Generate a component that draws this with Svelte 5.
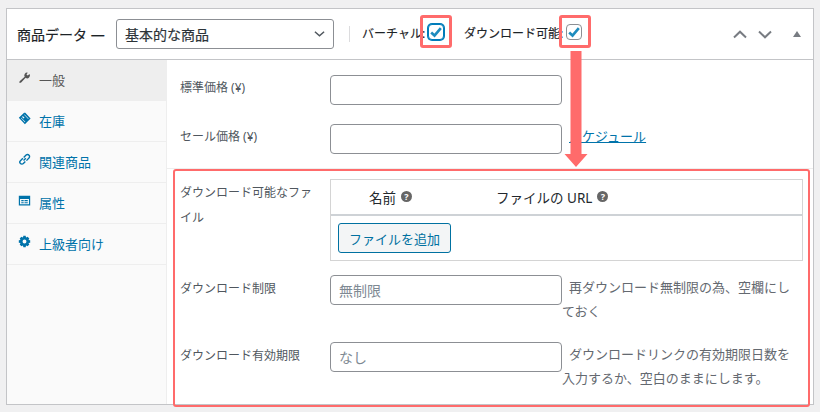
<script lang="ts">
  const tabs = [
    { id: 'wrench', label: '一般' },
    { id: 'tag', label: '在庫' },
    { id: 'link', label: '関連商品' },
    { id: 'table', label: '属性' },
    { id: 'gear', label: '上級者向け' }
  ];
</script>

{#snippet check()}
  <svg class="tick" viewBox="0 0 16 16" aria-hidden="true">
    <path d="M2.5 8.5 L6.3 12 L13.5 3.5" />
  </svg>
{/snippet}

{#snippet help()}
  <span class="help">?</span>
{/snippet}

<div class="page">
  <div class="panel">
    <header class="head">
      <h2>商品データ —</h2>
      <div class="select">
        <span>基本的な商品</span>
        <svg viewBox="0 0 12 8" aria-hidden="true"><path d="M1 1.5 L6 6 L11 1.5" /></svg>
      </div>
      <i class="sep"></i>
      <span class="opt">バーチャル:</span>
      <span class="box focus">{@render check()}</span>
      <span class="opt second">ダウンロード可能:</span>
      <span class="box">{@render check()}</span>
      <div class="handles">
        <svg viewBox="0 0 14 9" aria-hidden="true"><path d="M1 7.5 L7 1.7 L13 7.5" /></svg>
        <svg viewBox="0 0 14 9" aria-hidden="true"><path d="M1 1.5 L7 7.3 L13 1.5" /></svg>
        <i class="toggle"></i>
      </div>
    </header>

    <div class="body">
      <ul class="tabs">
        {#each tabs as tab, i}
          <li class:active={i === 0}>
            <svg viewBox="0 0 16 16" aria-hidden="true">
              {#if tab.id === 'wrench'}
                <path d="M1.5 14.5 L2 12.5 L8.2 7 A3.4 3.4 0 0 1 12 2 L10.4 4.2 L12 5.6 L14.2 3.8 A3.4 3.4 0 0 1 9.4 8.4 L3.6 14.6 Z" />
              {:else if tab.id === 'tag'}
                <path fill-rule="evenodd" d="M1 7 L7.5 1 L9 1 L15.5 8 L8.5 15 Z M5 6 L7 8 L8 7 L6 5 Z M7.5 3.5 L12.5 8.5 L13 8 L8 3 Z M3.5 7.5 L8.5 12.5 L9 12 L4 7 Z" />
              {:else if tab.id === 'link'}
                <path class="line" d="M6.8 9.2 L9.6 6.4 M6 6.4 L3 9.4 A2.4 2.4 0 0 0 6.6 13 L9 10.4 M7 5.6 L10 2.6 A2.4 2.4 0 0 1 13.5 6.2 L10.4 9.4" />
              {:else if tab.id === 'table'}
                <path fill-rule="evenodd" d="M1 2 H15 V14 H1 Z M2.5 6 V12.5 H13.5 V6 Z M4 7.5 H7 V9 H4 Z M8 7.5 H12 V9 H8 Z M4 10 H7 V11.5 H4 Z M8 10 H12 V11.5 H8 Z" />
              {:else}
                <path fill-rule="evenodd" d="M6.6 1 H9.4 L9.9 3.1 L11.8 2.1 L13.9 4.2 L12.9 6.1 L15 6.6 V9.4 L12.9 9.9 L13.9 11.8 L11.8 13.9 L9.9 12.9 L9.4 15 H6.6 L6.1 12.9 L4.2 13.9 L2.1 11.8 L3.1 9.9 L1 9.4 V6.6 L3.1 6.1 L2.1 4.2 L4.2 2.1 L6.1 3.1 Z M8 5.6 A2.4 2.4 0 1 0 8 10.4 A2.4 2.4 0 1 0 8 5.6 Z" />
              {/if}
            </svg>
            <span>{tab.label}</span>
          </li>
        {/each}
      </ul>

      <div class="fields">
        <section class="group">
          <div class="row">
            <label for="price">標準価格 (¥)</label>
            <input id="price" />
          </div>
          <div class="row">
            <label for="sale">セール価格 (¥)</label>
            <input id="sale" />
            <a href="#schedule">スケジュール</a>
          </div>
        </section>

        <section class="group dl">
          <div class="files-row">
            <div class="label-text">ダウンロード可能なファイル</div>
            <div class="files">
              <div class="files-head">
                <span class="name">名前 {@render help()}</span>
                <span class="url">ファイルの URL {@render help()}</span>
              </div>
              <div class="files-foot"><button>ファイルを追加</button></div>
            </div>
          </div>
          <div class="row note">
            <label for="limit">ダウンロード制限</label>
            <p><input id="limit" placeholder="無制限" /><span>再ダウンロード無制限の為、空欄にしておく</span></p>
          </div>
          <div class="row note">
            <label for="expiry">ダウンロード有効期限</label>
            <p><input id="expiry" placeholder="なし" /><span>ダウンロードリンクの有効期限日数を入力するか、空白のままにします。</span></p>
          </div>
        </section>
      </div>
    </div>
  </div>

  <!-- annotations drawn on top of the screenshot -->
  <i class="mark m1"></i>
  <i class="mark m2"></i>
  <i class="mark m3"></i>
  <svg class="arrow" viewBox="0 0 24 116" aria-hidden="true">
    <path d="M6.5 0 H17.5 V103 H23.5 L12 116 L0.5 103 H6.5 Z" />
  </svg>
</div>

<style>
  :global(body) {
    margin: 0;
    background: #f0f0f1;
  }
  .page {
    position: relative;
    width: 820px;
    height: 412px;
    padding: 8px 6px 0 6px;
    box-sizing: border-box;
    overflow: hidden;
    font-family: "Noto Sans", "Noto Sans CJK JP", sans-serif;
    font-size: 13px;
    color: #3c434a;
  }
  .panel {
    height: 397px;
    box-sizing: border-box;
    background: #fff;
    border: 1px solid #c3c4c7;
    display: flex;
    flex-direction: column;
  }
  .head {
    height: 51px;
    flex: none;
    box-sizing: border-box;
    border-bottom: 1px solid #c3c4c7;
    display: flex;
    align-items: center;
    padding-left: 10px;
    color: #1d2327;
  }
  h2 {
    margin: 0;
    font-size: 14px;
    font-weight: 400;
    -webkit-text-stroke: 0.2px #1d2327;
    white-space: nowrap;
    width: 99px;
  }
  .select {
    width: 218px;
    height: 30px;
    box-sizing: border-box;
    border: 1px solid #8c8f94;
    border-radius: 3px;
    display: flex;
    align-items: center;
    justify-content: space-between;
    padding: 0 8px;
    font-size: 14px;
    -webkit-text-stroke: 0.2px #2c3338;
    color: #2c3338;
  }
  .select svg {
    width: 11px;
    height: 8px;
  }
  .select path {
    fill: none;
    stroke: #50575e;
    stroke-width: 1.6;
  }
  .sep {
    width: 1px;
    height: 16px;
    background: #dcdcde;
    margin: 0 12px 0 15px;
  }
  .opt {
    white-space: nowrap;
    font-size: 12px;
    margin-top: -2px;
    -webkit-text-stroke: 0.15px #1d2327;
  }
  .second {
    margin-left: 20px;
  }
  .box {
    width: 16px;
    height: 16px;
    flex: none;
    box-sizing: border-box;
    border: 1px solid #8c8f94;
    border-radius: 4px;
    margin-left: 3px;
    margin-top: -4px;
    display: flex;
    align-items: center;
    justify-content: center;
    background: #fff;
    position: relative;
    z-index: 1;
  }
  .box.focus {
    border-color: #007cba;
    box-shadow: 0 0 0 1px #007cba;
  }
  .tick {
    width: 14px;
    height: 14px;
  }
  .tick path {
    fill: none;
    stroke: #1e8cbe;
    stroke-width: 3;
  }
  .handles {
    margin-left: auto;
    display: flex;
    align-items: center;
    gap: 11px;
    padding-right: 12px;
  }
  .handles svg {
    width: 14px;
    height: 9px;
  }
  .handles path {
    fill: none;
    stroke: #787c82;
    stroke-width: 2;
  }
  .toggle {
    margin-left: 10px;
    width: 0;
    height: 0;
    border: 4px solid transparent;
    border-top: 0;
    border-bottom: 6px solid #787c82;
  }
  .body {
    flex: 1;
    display: flex;
    min-height: 0;
  }
  .tabs {
    list-style: none;
    margin: 0;
    padding: 0;
    width: 160px;
    flex: none;
    box-sizing: border-box;
    background: #fafafa;
    border-right: 1px solid #eee;
  }
  .tabs li {
    height: 41px;
    box-sizing: border-box;
    border-bottom: 1px solid #eee;
    display: flex;
    align-items: center;
    padding: 0 0 2px 11px;
    gap: 8px;
    color: #0073aa;
  }
  .tabs li.active {
    background: #eee;
    color: #555;
    margin-right: -1px;
  }
  .tabs svg {
    width: 13px;
    height: 13px;
    fill: #0073aa;
    margin-top: -3px;
  }
  .tabs li.active svg {
    fill: #555;
  }
  .tabs .line {
    fill: none;
    stroke: #0073aa;
    stroke-width: 1.7;
  }
  .fields {
    flex: 1;
    min-width: 0;
  }
  .group {
    border-bottom: 1px solid #eee;
  }
  .group:first-child {
    height: 109px;
    box-sizing: border-box;
    padding-top: 15px;
  }
  .group.dl {
    border-bottom: 0;
    padding-top: 10px;
  }
  .row {
    display: flex;
    align-items: flex-start;
    height: 30px;
    margin-bottom: 19px;
    padding-left: 13px;
  }
  label,
  .label-text {
    width: 143px;
    flex: none;
    box-sizing: content-box;
    padding-top: 1px;
    font-size: 12px;
    line-height: 24px;
    color: #50575e;
    margin-right: 7px;
  }
  input {
    width: 232px;
    height: 30px;
    box-sizing: border-box;
    flex: none;
    padding: 0 8px;
    border: 1px solid #8c8f94;
    border-radius: 4px;
    background: #fff;
    font: inherit;
    font-size: 14px;
    color: #2c3338;
  }
  input::placeholder {
    color: #7e8993;
    opacity: 1;
  }
  .row a {
    margin-left: 7px;
    font-size: 13px;
    line-height: 24px;
    color: #0073aa;
  }
  .files-row {
    display: flex;
    padding-left: 13px;
    height: 96px;
  }
  .label-text {
    line-height: 25px;
  }
  .files {
    width: 473px;
    height: 82px;
    box-sizing: border-box;
    border: 1px solid #d4d4d4;
    flex: none;
  }
  .files-head {
    height: 36px;
    box-sizing: border-box;
    border-bottom: 2px solid #ced2d6;
    display: flex;
    color: #23282d;
    font-size: 13.5px;
  }
  .files-head .name,
  .files-head .url {
    display: flex;
    align-items: center;
    gap: 5px;
    height: 33px;
  }
  .files-head .name {
    margin-left: 38px;
  }
  .files-head .url {
    margin-left: 84px;
  }
  .help {
    width: 11px;
    height: 11px;
    border-radius: 50%;
    background: #666;
    color: #fff;
    font-size: 9px;
    font-weight: 700;
    line-height: 11px;
    text-align: center;
  }
  .files-foot {
    padding: 7px;
  }
  button {
    height: 30px;
    box-sizing: border-box;
    padding: 0 10px;
    border: 1px solid #0071a1;
    border-radius: 3px;
    background: #f3f5f6;
    color: #0071a1;
    font: inherit;
    font-size: 13px;
  }
  .note {
    height: 48px;
    margin: 0 0 19px;
  }
  .note label {
    padding-top: 2px;
  }
  .note p {
    margin: 0;
    width: 470px;
    flex: none;
    font-size: 13px;
    line-height: 24px;
    color: #646970;
  }
  .note p input {
    float: left;
  }
  .note p span {
    padding-left: 7px;
  }
  .mark,
  .arrow {
    position: absolute;
    box-sizing: border-box;
    z-index: 2;
  }
  .mark {
    border: 3px solid #ff6b6b;
    border-radius: 3px;
  }
  .m1 {
    left: 420px;
    top: 15px;
    width: 32px;
    height: 33px;
  }
  .m2 {
    left: 559px;
    top: 15px;
    width: 32px;
    height: 33px;
  }
  .m3 {
    left: 173px;
    top: 169px;
    width: 637px;
    height: 238px;
    border-width: 2px;
  }
  .arrow {
    left: 564px;
    top: 51px;
    width: 24px;
    height: 116px;
  }
  .arrow path {
    fill: #ff6b6b;
  }
</style>
